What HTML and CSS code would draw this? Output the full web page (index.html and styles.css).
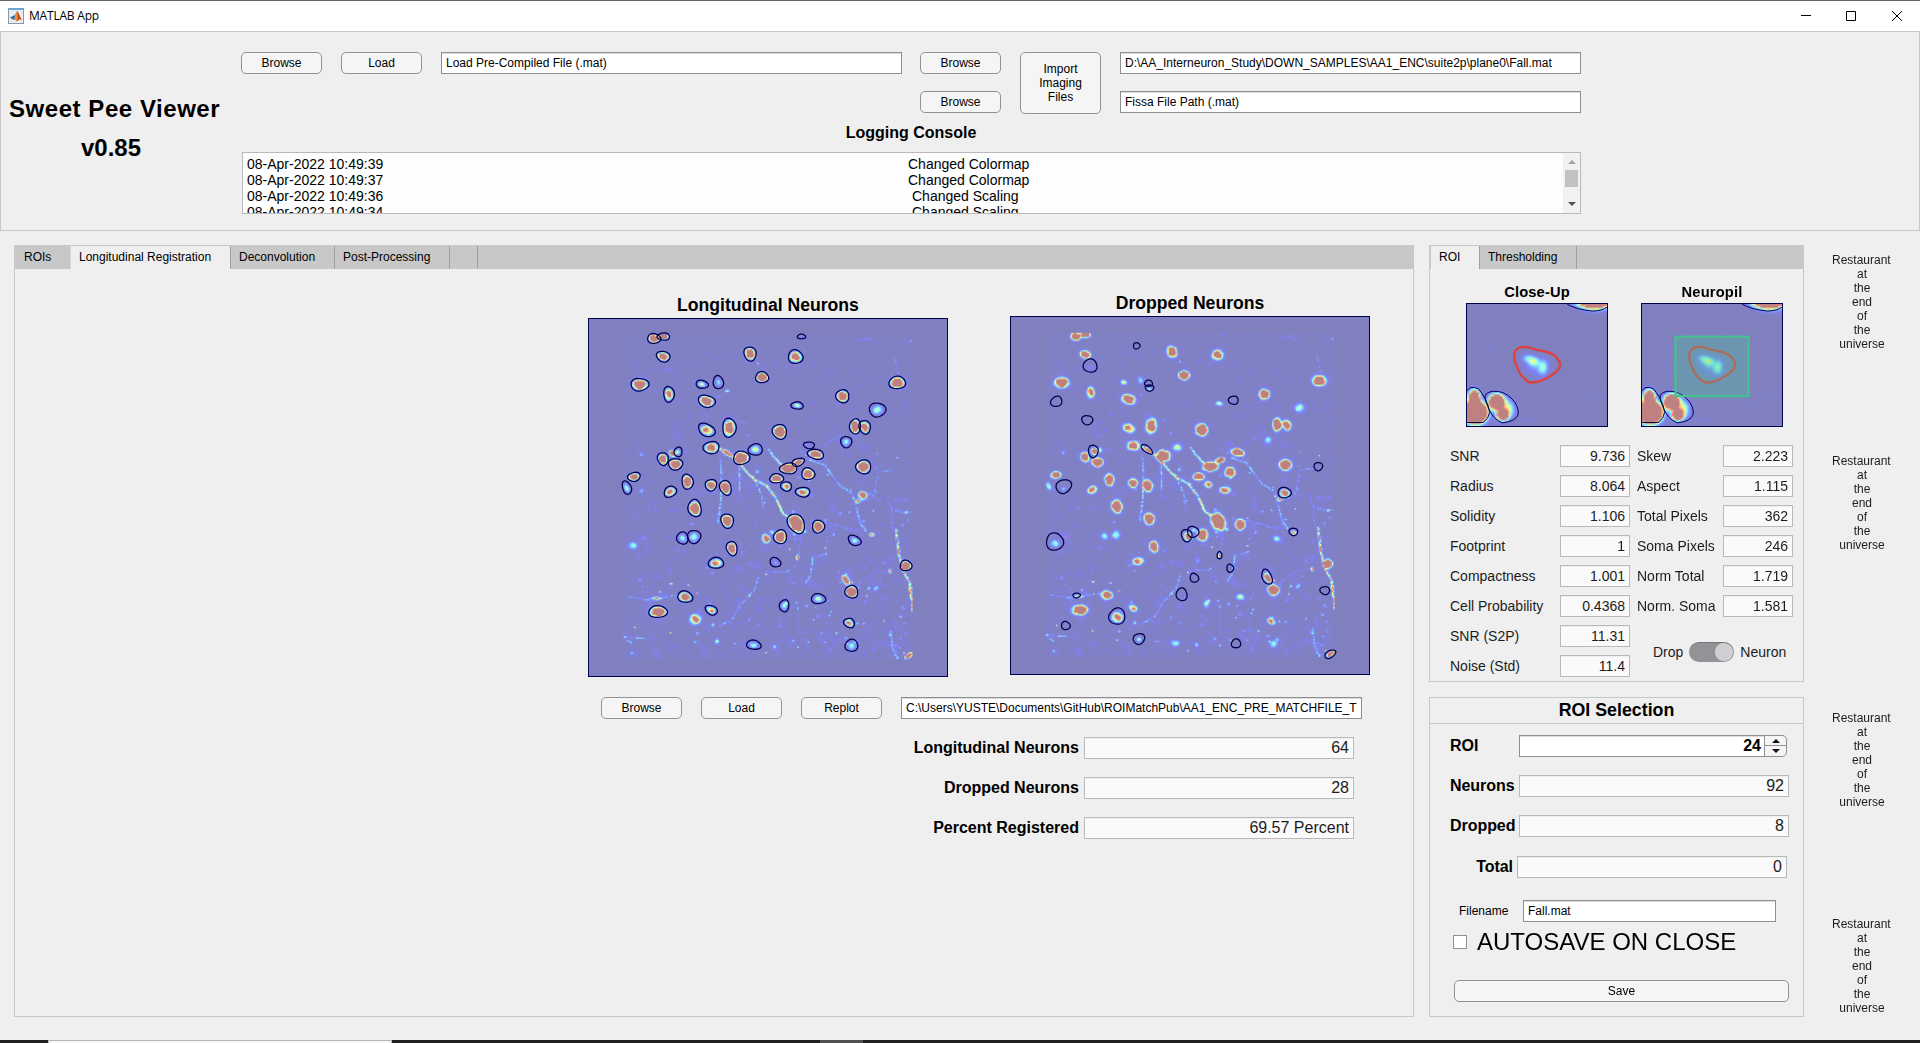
FILE: index.html
```html
<!DOCTYPE html>
<html lang="en">
<head>
<meta charset="utf-8">
<title>MATLAB App</title>
<link rel="stylesheet" href="styles.css">
</head>
<body>
<header class="titlebar">
  <svg class="app-icon" width="16" height="16" viewBox="0 0 16 16">
    <rect x=".5" y=".5" width="15" height="15" fill="#e9edf1" stroke="#8c99a5"/>
    <rect x="0" y="0" width="16" height="2" fill="#6ea4cf"/>
    <path d="M2 9.500 5 8l2-1 2-4-3 9-2-1z" fill="#2c6ea8"/>
    <path d="M9 3c1.500 1 3 6 5 9-2-1-3-1-5 1.500-1-1.500-2-2-3-1.500C8 10 8 6 9 3z" fill="#c8441b"/>
    <path d="M9 3c.6 2 .8 6 .2 10-1-1-2-1.500-3-1C8 10 8 6 9 3z" fill="#f09a3a"/>
  </svg>
  <span class="app-name">MATLAB App</span>
  <svg class="window-controls" width="104" height="12" viewBox="0 0 104 12" fill="none" stroke="#000">
    <path d="M0 5.500h10M45.500 1.500h9v9h-9zM91 1l10 10M101 1 91 11"/>
  </svg>
</header>

<section class="top-panel">
  <div class="brand"><h1>Sweet Pee Viewer</h1><p>v0.85</p></div>
  <div class="loader">
    <div class="file-grid">
      <button class="btn">Browse</button>
      <button class="btn">Load</button>
      <div class="field precompiled">Load Pre-Compiled File (.mat)</div>
      <button class="btn">Browse</button>
      <button class="btn import">Import<br>Imaging<br>Files</button>
      <div class="field">D:\AA_Interneuron_Study\DOWN_SAMPLES\AA1_ENC\suite2p\plane0\Fall.mat</div>
      <button class="btn second-browse">Browse</button>
      <div class="field second-path">Fissa File Path (.mat)</div>
    </div>
    <h2 class="console-title">Logging Console</h2>
    <div class="console">
      <div class="log">
        <div class="log-row"><span>08-Apr-2022 10:49:39</span><span>Changed Colormap</span></div>
        <div class="log-row"><span>08-Apr-2022 10:49:37</span><span>Changed Colormap</span></div>
        <div class="log-row"><span>08-Apr-2022 10:49:36</span><span class="short">Changed Scaling</span></div>
        <div class="log-row"><span>08-Apr-2022 10:49:34</span><span class="short">Changed Scaling</span></div>
      </div>
      <div class="scrollbar">
        <i class="arrow up"></i><i class="thumb"></i><i class="arrow down"></i>
      </div>
    </div>
  </div>
</section>

<main class="workspace">
  <section class="tab-group main-group">
    <nav class="tabs">
      <span class="tab t-rois">ROIs</span><span class="tab active t-long">Longitudinal Registration</span><span class="tab t-dec">Deconvolution</span><span class="tab t-post">Post-Processing</span><span class="tab t-blank"></span>
    </nav>
    <div class="main-body">
      <div class="plots">
        <figure class="plot">
          <figcaption>Longitudinal Neurons</figcaption>
          <div class="axes"><canvas class="heat" id="heat-long" width="270" height="269"></canvas><svg class="outlines" id="outline-long" viewBox="25 85 1080 1077"></svg></div>
        </figure>
        <figure class="plot raised">
          <figcaption>Dropped Neurons</figcaption>
          <div class="axes"><canvas class="heat" id="heat-drop" width="270" height="269"></canvas><svg class="outlines" id="outline-drop" viewBox="31 79 1080 1077"></svg></div>
        </figure>
      </div>
      <div class="match-row">
        <button class="btn">Browse</button><button class="btn">Load</button><button class="btn">Replot</button>
        <div class="field">C:\Users\YUSTE\Documents\GitHub\ROIMatchPub\AA1_ENC_PRE_MATCHFILE_T</div>
      </div>
      <div class="summary">
        <label>Longitudinal Neurons</label><div class="field readonly">64</div>
        <label>Dropped Neurons</label><div class="field readonly">28</div>
        <label>Percent Registered</label><div class="field readonly">69.57 Percent</div>
      </div>
    </div>
  </section>

  <aside class="side">
    <section class="tab-group roi-group">
      <nav class="tabs"><span class="tab active t-roi">ROI</span><span class="tab t-thr">Thresholding</span></nav>
      <div class="previews">
        <figure class="preview"><figcaption>Close-Up</figcaption>
          <div class="mini"><canvas class="heat" id="heat-close" width="71" height="62"></canvas>
            <svg class="outlines" viewBox="138 190 426 370">
              <g fill="none" stroke="#000050" stroke-width="3"><path d="M443 190Q470 206 520 211 550 210 564 199M138 453Q146 440 160 443 176 445 181 458L193 476Q205 500 207 520 203 540 187 550L138 550M193 476Q190 460 215 455 250 452 275 478 296 500 294 525 286 548 245 551 218 540 205 510 195 490 193 476"/></g>
              <path d="M283 338Q290 315 325 321 350 330 385 336 420 350 422 376 418 395 385 412 360 430 328 428 298 410 291 382 278 360 283 338z" fill="none" stroke="#e0403c" stroke-width="7"/>
            </svg></div></figure>
        <figure class="preview"><figcaption>Neuropil</figcaption>
          <div class="mini"><canvas class="heat" id="heat-pil" width="71" height="62"></canvas>
            <svg class="outlines" viewBox="138 190 426 370">
              <g fill="none" stroke="#000050" stroke-width="3"><path d="M443 190Q470 206 520 211 550 210 564 199M138 453Q146 440 160 443 176 445 181 458L193 476Q205 500 207 520 203 540 187 550L138 550M193 476Q190 460 215 455 250 452 275 478 296 500 294 525 286 548 245 551 218 540 205 510 195 490 193 476"/></g>
              <path d="M283 338Q290 315 325 321 350 330 385 336 420 350 422 376 418 395 385 412 360 430 328 428 298 410 291 382 278 360 283 338z" fill="none" stroke="#e0403c" stroke-width="7"/>
              <rect x="240" y="289" width="222" height="181" fill="#48bf91" fill-opacity=".35"/>
              <rect x="240" y="289" width="222" height="181" fill="none" stroke="#48bf91" stroke-width="7"/>
            </svg></div></figure>
      </div>
      <div class="stats">
        <span>SNR</span><div class="field readonly">9.736</div><span>Skew</span><div class="field readonly">2.223</div>
        <span>Radius</span><div class="field readonly">8.064</div><span>Aspect</span><div class="field readonly">1.115</div>
        <span>Solidity</span><div class="field readonly">1.106</div><span>Total Pixels</span><div class="field readonly">362</div>
        <span>Footprint</span><div class="field readonly">1</div><span>Soma Pixels</span><div class="field readonly">246</div>
        <span>Compactness</span><div class="field readonly">1.001</div><span>Norm Total</span><div class="field readonly">1.719</div>
        <span>Cell Probability</span><div class="field readonly">0.4368</div><span>Norm. Soma</span><div class="field readonly">1.581</div>
        <span>SNR (S2P)</span><div class="field readonly">11.31</div>
        <div class="toggle-row"><span>Drop</span><i class="switch"></i><span>Neuron</span></div>
        <span>Noise (Std)</span><div class="field readonly">11.4</div>
      </div>
    </section>

    <section class="selection">
      <h2>ROI Selection</h2>
      <div class="sel-row"><label>ROI</label>
        <div class="spinner"><div class="field">24</div><div class="steps"><i class="step up"></i><i class="step down"></i></div></div></div>
      <div class="sel-row"><label>Neurons</label><div class="field readonly">92</div></div>
      <div class="sel-row"><label>Dropped</label><div class="field readonly">8</div></div>
      <div class="sel-row total"><label>Total</label><div class="field readonly">0</div></div>
      <div class="file-row"><label>Filename</label><div class="field">Fall.mat</div></div>
      <div class="auto-row"><i class="checkbox"></i><span>AUTOSAVE ON CLOSE</span></div>
      <button class="btn save">Save</button>
    </section>
  </aside>

  <div class="notes">
    <p>Restaurant&nbsp;<br>at<br>the<br>end<br>of<br>the<br>universe</p>
    <p>Restaurant&nbsp;<br>at<br>the<br>end<br>of<br>the<br>universe</p>
    <p>Restaurant&nbsp;<br>at<br>the<br>end<br>of<br>the<br>universe</p>
    <p>Restaurant&nbsp;<br>at<br>the<br>end<br>of<br>the<br>universe</p>
  </div>
</main>
<footer class="taskbar"><i class="task-open"></i><i class="task-item"></i></footer>
<script src="plots.js"></script>
</body>
</html>
```
FILE: styles.css
```css
* { box-sizing: border-box; }
body {
  margin: 0; width: 1920px; height: 1043px; overflow: hidden;
  display: flex; flex-direction: column;
  background: #efefef; color: #000;
  font: 12px/14px "Liberation Sans", Arial, sans-serif;
}
h1, h2, p, figure { margin: 0; }
button { font: inherit; color: inherit; }

.titlebar {
  height: 31px; flex: none; display: flex; align-items: center;
  padding: 0 15px 0 8px; background: #fff; border-top: 1px solid #666;
}
.app-icon { margin-top: -1px; }
.app-name { margin-left: 5px; font: 12px/16px "Open Sans", sans-serif; letter-spacing: -.2px; }
.window-controls { margin: -1px 0 0 auto; width: 104px; }

.top-panel { height: 200px; flex: none; display: flex; border: 1px solid #c8c8c8; }
.brand { width: 240px; flex: none; padding: 63px 0 0 8px; font-weight: bold; }
.brand h1 { font-size: 24px; line-height: 28px; letter-spacing: .55px; white-space: nowrap; }
.brand p { font-size: 24px; line-height: 28px; margin-top: 11px; width: 204px; text-align: center; }
.loader { padding-top: 20px; width: 1340px; }
.file-grid {
  display: grid; grid-template-columns: 81px 81px 460px 81px 81px 461px;
  grid-template-rows: 22px 22px; gap: 17px 19px;
}
.btn {
  height: 22px; padding: 0; border: 1px solid #929292; border-radius: 5px;
  background: #f5f5f5; text-align: center; line-height: 14px;
}
.import { grid-row: 1 / 3; grid-column: 5; height: 62px; }
.precompiled { margin-right: -1px; }
.second-browse { grid-column: 4; grid-row: 2; }
.second-path { grid-column: 6; grid-row: 2; }
.field {
  height: 22px; padding: 0 4px; border: 1px solid #8f8f8f; background: #fff;
  line-height: 20px; white-space: nowrap; overflow: hidden;
  box-shadow: inset 0 1px 0 #dcdcdc;
}
.field.readonly { border-color: #b9b9b9; background: #fafafa; box-shadow: inset 0 1px 0 #efefef; text-align: right; color: #1c1c1c; }
.console-title { margin-top: 11px; text-align: center; font-size: 16px; line-height: 18px; }
.console {
  margin: 10px 0 0 1px; height: 62px; display: flex; overflow: hidden;
  border: 1px solid #b9b9b9; background: #fdfdfd; font-size: 14px; line-height: 16px;
}
.log { flex: 1; padding: 3px 0 0 4px; }
.log-row { display: flex; height: 16px; white-space: pre; }
.log-row span:first-child { width: 661px; }
.log-row .short { padding-left: 4px; }
.scrollbar { width: 17px; background: #f1f1f1; display: flex; flex-direction: column; align-items: center; padding: 7px 0; }
.arrow { border: 4px solid transparent; }
.arrow.up { border-top: 0; border-bottom-color: #a3a3a3; }
.arrow.down { border-bottom: 0; border-top-color: #505050; margin-top: auto; }
.thumb { width: 13px; height: 17px; margin-top: 6px; background: #c1c1c1; }

.workspace { flex: 1; min-height: 0; display: flex; padding: 14px 0 0 14px; }
.tab-group { border: 1px solid #c8c8c8; }
.main-group { width: 1400px; height: 772px; }
.tabs { display: flex; height: 23px; background: #c8c8c8; line-height: 23px; }
.tab { padding-left: 8px; border-right: 1px solid #9f9f9f; }
.tab.active { background: #efefef; }
.t-rois { width: 56px; padding-left: 9px; border-right-color: #d8d8d8; }
.t-long { width: 160px; }
.t-dec { width: 104px; }
.t-post { width: 115px; }
.t-blank { width: 28px; }
.t-roi { width: 49px; margin-left: 1px; padding-left: 8px; }
.t-thr { width: 97px; }

.main-body { padding: 26px 0 0 573px; }
.plots { display: flex; gap: 62px; }
.plot { width: 360px; }
.plot figcaption { height: 23px; text-align: center; font-size: 17.600px; line-height: 20px; font-weight: bold; }
.raised { margin-top: -2px; }
.axes { display: grid; width: 360px; height: 359px; border: 1px solid #000050; }
.heat, .outlines { grid-area: 1 / 1; width: 100%; height: 100%; min-height: 0; min-width: 0; }
.heat { background: #8080c0; }
.match-row { display: flex; gap: 19px; margin: 20px 0 0 13px; }
.match-row .btn { width: 81px; }
.match-row .field { width: 461px; }
.summary {
  margin: 18px 0 0 313px; width: 453px; display: grid; grid-template-columns: 178px 270px;
  column-gap: 5px; row-gap: 18px; font-size: 16px; line-height: 22px; text-align: right;
}
.summary label { font-weight: bold; }

.side { width: 375px; margin-left: 15px; }
.roi-group { height: 437px; }
.previews { display: flex; padding: 15px 0 0 36px; gap: 33px; }
.preview { width: 142px; }
.preview figcaption { height: 19px; font-size: 14.700px; line-height: 17px; letter-spacing: .15px; font-weight: bold; text-align: center; }
.mini { display: grid; width: 142px; height: 124px; border: 1px solid #000050; }
.stats {
  display: grid; grid-template-columns: 110px 70px 93px 70px; row-gap: 8px;
  padding: 18px 0 0 20px; font-size: 14px; line-height: 22px; color: #1c1c1c; white-space: nowrap;
}
.stats .field + span:not(:nth-last-child(2)) { padding-left: 7px; }
.stats > span:nth-child(4n+1) { padding-left: 0 !important; }
.toggle-row { grid-column: 3 / 5; grid-row: 7 / 9; display: flex; align-items: center; margin-top: 5px; padding: 5px 0 0 23px; height: 38px; }
.switch { width: 45px; height: 20px; margin: 0 6px; border-radius: 10px; border-top: 1px solid #777; background: radial-gradient(circle 9px at 35px 9px, #cfd0d2 8.500px, #929297 9.500px); }

.selection { margin-top: 15px; height: 320px; border: 1px solid #c8c8c8; }
.selection h2 { height: 26px; border-bottom: 1px solid #c8c8c8; text-align: center; font-size: 17.800px; line-height: 25px; margin-bottom: 11px; }
.sel-row { display: flex; height: 22px; margin: 0 0 18px 20px; font-size: 16px; }
.sel-row label { width: 69px; font-weight: bold; line-height: 22px; letter-spacing: -.05px; }
.sel-row > .field { width: 270px; }
.spinner { width: 268px; display: flex; }
.spinner .field { flex: 1; font-weight: bold; text-align: right; padding-right: 3px; }
.steps { width: 22px; display: grid; grid-template-rows: 1fr 1fr; border: 1px solid #8f8f8f; border-left: 0; border-radius: 0 5px 5px 0; background: #f5f5f5; }
.step { display: grid; place-items: center; }
.step.up { border-bottom: 1px solid #8f8f8f; }
.step::before { content: ""; border: 4px solid transparent; }
.step.up::before { border-top: 0; border-bottom-color: #111; }
.step.down::before { border-bottom: 0; border-top-color: #111; }
.total { margin: 19px 0 22px 18px; }
.total label { text-align: right; padding-right: 4px; }
.file-row { display: flex; height: 22px; margin-left: 29px; line-height: 22px; }
.file-row label { width: 64px; }
.file-row .field { width: 253px; }
.auto-row { display: flex; align-items: center; height: 28px; margin: 6px 0 24px 23px; font-size: 24px; line-height: 28px; }
.checkbox { width: 14px; height: 14px; margin-right: 10px; border: 1px solid #8f8f8f; background: #fff; }
.save { display: block; width: 335px; margin-left: 24px; }

.notes { width: 60px; margin-left: 28px; padding-top: 8px; text-align: center; color: #1c1c1c; white-space: nowrap; }
.notes p { height: 98px; }
.notes p:nth-child(2) { margin-top: 103px; }
.notes p:nth-child(3) { margin-top: 159px; }
.notes p:nth-child(4) { margin-top: 108px; }

.taskbar { height: 3px; flex: none; display: flex; background: #202022; }
.task-open { width: 344px; margin-left: 48px; background: #f5f5f5; border: 1px solid #b5b5b5; border-bottom: 0; }
.task-item { width: 43px; margin-left: 428px; background: #505050; }
```
FILE: plots.js
```js
// Cells: centre x, centre y, radius x, radius y, tilt, peak, outlined in the first plot
const cells = [
  [221,144,19,15,0,2.6,1],[250,138,18,11,0,3,1],[249,198,21,15,15,1.8,1],[511,190,18,21,-25,2.6,1],
  [648,199,22,20,0,1.5,1],[547,261,20,16,0,3,1],[178,283,26,19,0,2.6,1],[266,312,16,23,0,1.1,1],
  [366,282,18,12,8,.45,1],[415,276,15,20,-5,.28,1],[380,333,25,18,15,2.4,1],[666,138,12,7,0,.08,1],
  [955,277,24,19,0,3,1],[790,318,20,19,0,2.4,1],[653,346,18,11,5,.5,1],[895,359,24,21,10,.42,1],
  [380,420,26,18,25,.9,1],[448,413,20,28,5,2,1],[600,425,21,22,-20,3.2,1],[828,409,16,23,0,3,1],
  [857,411,17,20,-20,1.7,1],[801,456,17,16,0,.36,1],[394,473,24,18,0,1.7,1],[527,479,21,17,0,.5,1],
  [485,504,24,20,0,3.4,1],[689,466,16,10,8,.06,1],[709,493,25,14,12,2.2,1],[248,507,16,19,-10,2.3,1],
  [277,490,13,13,0,1.8,0],[294,486,12,14,0,.35,1],[286,523,21,17,5,2.5,1],[627,536,26,16,0,4,1],
  [656,517,19,11,-15,1.9,1],[686,552,19,18,0,2.8,1],[853,531,23,20,0,2.5,1],[161,561,19,13,-8,2.2,1],
  [139,594,13,20,-20,.4,1],[591,566,20,14,0,2.4,1],[620,590,16,14,5,1,1],[670,607,22,14,0,1.1,1],
  [322,576,17,22,-5,2.5,1],[270,606,20,15,-30,1.1,1],[393,586,17,17,0,2.1,1],[437,594,17,22,-20,2.8,1],
  [344,656,20,25,-15,2.2,1],[442,694,19,21,-20,3,1],[650,702,23,31,-28,4,1],[717,711,18,19,-20,2.8,1],
  [307,746,17,18,0,.3,1],[342,742,19,20,0,.42,1],[602,742,19,21,0,3.3,1],[559,747,16,18,-20,1.4,0],
  [826,753,20,14,25,.35,1],[456,777,16,21,-10,2.6,1],[408,821,23,16,-5,.9,1],[587,819,17,13,35,.15,1],
  [981,829,17,16,0,3,1],[817,908,20,18,25,3.4,1],[800,872,13,21,-30,1.5,0],[315,923,22,17,10,1.6,1],
  [717,929,21,15,0,.45,1],[614,950,14,18,0,.35,1],[233,968,27,18,0,3,1],[394,963,19,13,30,.8,1],
  [346,990,23,21,0,1,0],[810,1002,17,13,25,.9,1],[817,1070,19,18,10,.35,1],[522,1068,21,14,8,.38,1],
  [851,616,17,15,0,1.7,0],[878,735,10,9,0,1,0],[158,768,20,17,0,.4,0],[184,603,12,12,0,.2,0],
  [443,302,13,7,0,.35,0],[441,488,21,9,35,1.4,0],[654,804,7,11,0,.9,0],[230,927,21,7,5,.6,0],
  [411,1057,12,12,0,.38,0],[990,1100,17,9,-35,2,0],[264,238,26,10,10,.09,0],[535,220,7,7,0,.25,0],
  [836,634,9,9,0,1,0],[577,727,12,10,0,.35,0],[934,845,7,9,0,1,0]
];
// Outlines of the dropped plot
const dropped = [
  [410,166,10,9,0],[270,226,20,20,10],[446,279,12,9,5],[449,293,13,9,0],[168,334,17,15,-20],[702,330,15,12,0],
  [261,390,16,14,10],[279,484,14,19,0],[441,478,20,9,38],[190,590,23,20,-30],[856,609,19,16,0],[958,530,13,12,0],
  [163,757,26,25,-25],[561,738,16,18,-20],[580,727,17,16,0],[883,727,13,11,0],[660,798,7,11,0],[692,837,10,12,-15],
  [584,866,12,14,-25],[803,863,14,23,-25],[546,916,16,19,0],[978,904,14,12,0],[229,919,11,7,0],[351,982,24,24,0],
  [196,1010,13,12,0],[417,1050,17,16,-20],[710,1064,14,13,0],[994,1096,18,10,-30]
];
// Processes: brightness, thickness, points
const fibres = [
  [.5,5.5,[416,473,448,492,485,528,520,566,558,585,585,620,610,672,640,690]],
  [.4,5.5,[566,478,582,500,610,530]],[.28,4.5,[420,505,424,570,420,640,412,700]],
  [.25,4.5,[480,480,476,540,478,610]],[.25,4.5,[520,560,545,615,550,660]],[.28,4.5,[688,506,735,525,775,580,818,610,830,650,843,700,862,725]],
  [.75,5,[949,720,960,800,972,845,990,875,998,940,1001,970]],[.18,4,[925,620,930,650,965,665,1000,665]],
  [.16,4,[690,690,750,700,820,720,860,720]],[.13,4,[830,150,870,142,890,162]],[.2,4,[970,152,1001,150]],
  [.16,4,[947,205,958,255]],[.2,4,[890,545,940,540]],[.17,4,[893,560,880,625,840,635]],
  [.2,4,[560,847,620,845,650,825]],[.2,4.5,[535,860,520,905,480,945,460,985,415,1010]],
  [.2,4,[140,920,200,930,300,915]],[.26,4,[130,1040,170,1045,200,1050]],[.3,4,[130,1042,155,1065]],
  [.3,4.5,[933,1020,940,1080,955,1108]],[.12,4,[655,960,655,1040]],[.25,4.5,[700,800,690,860,675,880]],
  [.2,5,[712,800,745,790]],[.17,4,[662,720,655,800]],[.12,4,[937,650,940,720]],[.14,4,[830,890,880,850,930,840]],
  [.12,4,[720,470,790,430]],[.12,4,[280,450,310,420]],[.16,4,[375,835,408,825,435,795]]
];

function randomSource(seed) {
  return () => { seed = (seed * 1664525 + 1013904223) >>> 0; return seed / 4294967296; };
}
const unit = v => Math.max(0, Math.min(1, v));
function paint(canvas, values) {
  const context = canvas.getContext("2d");
  const image = context.createImageData(canvas.width, canvas.height);
  values.forEach((raw, i) => {
    const v = unit(raw);
    [3, 2, 1].forEach((k, c) => {
      image.data[i * 4 + c] = 127.5 + 127.5 * unit(1.5 - Math.abs(4 * v - k));
    });
    image.data[i * 4 + 3] = 255;
  });
  context.putImageData(image, 0, 0);
}
function blob(values, w, h, scale, ox, oy, x, y, rx, ry, tilt, peak, rough) {
  const a = tilt * Math.PI / 180, c = Math.cos(a), s = Math.sin(a), reach = Math.max(rx, ry) * 1.5;
  for (let j = Math.max(0, Math.floor((y - reach - oy) / scale)); j < Math.min(h, (y + reach - oy) / scale); j++)
    for (let i = Math.max(0, Math.floor((x - reach - ox) / scale)); i < Math.min(w, (x + reach - ox) / scale); i++) {
      const dx = i * scale + scale / 2 + ox - x, dy = j * scale + scale / 2 + oy - y;
      const u = (dx * c + dy * s) / rx, v = (dy * c - dx * s) / ry, d = u * u + v * v;
      const lump = 1 + rough * Math.sin(i * .9 + x) * Math.cos(j * .8 + y);
      values[j * w + i] += peak * lump * Math.exp(-3.3 * d);
    }
}
function field() {
  const w = 270, h = 269, values = new Float32Array(w * h), rnd = randomSource(7);
  const add = (x, y, rx, ry, t, p, r = .25) => blob(values, w, h, 4, 25, 85, x, y, rx, ry, t, p, r);
  cells.forEach(([x, y, rx, ry, t, p]) => add(x, y, rx * .98, ry * .98, t, p > .7 ? p * 1.5 : p * 1.25, p > .7 ? .35 : .25));
  fibres.forEach(([peak, size, p]) => {
    for (let k = 0; k + 3 < p.length; k += 2) {
      const length = Math.hypot(p[k + 2] - p[k], p[k + 3] - p[k + 1]), n = Math.ceil(length / 3.5);
      for (let m = 0; m < n; m++) {
        const f = m / n, strength = peak * (.25 + rnd());
        add(p[k] + f * (p[k + 2] - p[k]) + rnd() * 3, p[k + 1] + f * (p[k + 3] - p[k + 1]) + rnd() * 3, size, size, 0, strength);
      }
    }
  });
  for (let n = 0; n < 260; n++) {
    const x = 130 + 870 * Math.pow(rnd(), .75), y = 135 + 970 * Math.pow(rnd(), .5);
    const size = 4 + rnd() * 5;
    add(x, y, size, size, 0, .07 + .3 * Math.pow(rnd(), 3));
  }
  for (let n = 0; n < 460; n++) {
    const y = 135 + 970 * Math.pow(rnd(), .6);
    add(140 + 850 * rnd(), y, 10 + rnd() * 18, 7 + rnd() * 14, rnd() * 90, .035);
  }
  for (let n = 0; n < 60; n++) add(640 + 350 * rnd(), 480 + 610 * rnd(), 5, 5, 0, .12 + .35 * rnd());
  for (let n = 0; n < 18; n++) add(150 + 840 * rnd(), 700 + 400 * rnd(), 4.500, 4, 0, .8);
  for (let j = 0; j < h; j++) for (let i = 0; i < w; i++) {
    const x = i * 4 + 25, y = j * 4 + 85;
    if (x < 129 || x > 1000 || y < 130 || y > 1111) values[j * w + i] = 0;
    else values[j * w + i] += .006 + .008 * rnd();
  }
  return values;
}
function outline(svg, list) {
  svg.innerHTML = list.map(([x, y, rx, ry, tilt]) => {
    const a = tilt * Math.PI / 180, points = [];
    for (let k = 0; k < 28; k++) {
      const t = k * Math.PI / 14, r = 1.02 + .055 * Math.sin(3 * t + x) + .03 * Math.cos(2 * t + y);
      const u = rx * r * Math.cos(t), v = ry * r * Math.sin(t);
      points.push((x + u * Math.cos(a) - v * Math.sin(a)).toFixed(1) + "," + (y + u * Math.sin(a) + v * Math.cos(a)).toFixed(1));
    }
    return `<polygon points="${points.join(" ")}" fill="none" stroke="#000050" stroke-width="3.8"/>`;
  }).join("");
}
const values = field();
paint(document.getElementById("heat-long"), values);
paint(document.getElementById("heat-drop"), values);
outline(document.getElementById("outline-long"), cells.filter(c => c[6]));
outline(document.getElementById("outline-drop"), dropped);

function closeUp() {
  const w = 71, h = 62, v = new Float32Array(w * h), rnd = randomSource(3);
  const add = (...p) => blob(v, w, h, 6, 138, 190, ...p, .05);
  add(520, 178, 66, 34, 5, 5);
  add(164, 522, 43, 40, 0, 9); add(160, 480, 24, 36, 0, 4);
  add(228, 489, 32, 32, 0, 4); add(247, 528, 26, 24, 0, 3); add(262, 508, 34, 44, -20, .55);
  add(326, 357, 32, 22, 10, .36); add(343, 366, 28, 22, 0, .4); add(370, 384, 24, 40, 8, .4); add(345, 382, 54, 42, 0, .16);
  add(540, 465, 38, 9, -20, .035); add(480, 490, 34, 9, -20, .03); add(320, 545, 45, 12, 0, .05); add(210, 320, 20, 12, 0, .02); add(205, 375, 12, 40, 10, .02);
  for (let n = 0; n < 30; n++) add(140 + 420 * rnd(), 195 + 350 * rnd(), 25, 12, 0, .01);
  return v;
}
const near = closeUp();
paint(document.getElementById("heat-close"), near);
paint(document.getElementById("heat-pil"), near);
```
